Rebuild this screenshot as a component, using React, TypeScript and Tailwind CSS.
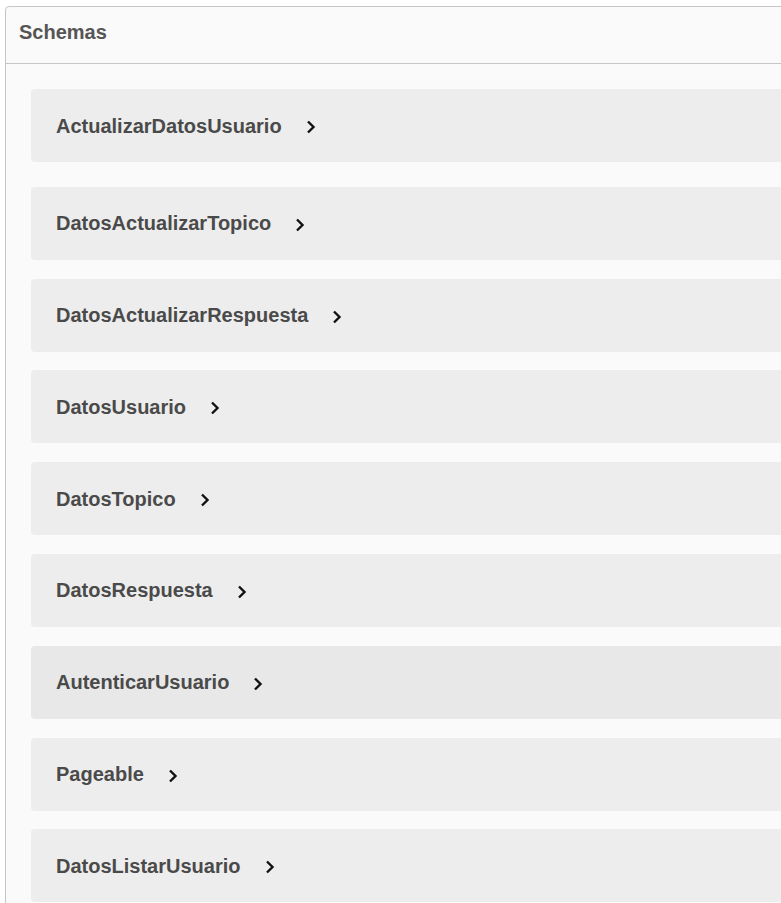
const schemas = [
  "ActualizarDatosUsuario",
  "DatosActualizarTopico",
  "DatosActualizarRespuesta",
  "DatosUsuario",
  "DatosTopico",
  "DatosRespuesta",
  "AutenticarUsuario",
  "Pageable",
  "DatosListarUsuario",
];

function Chevron() {
  return (
    <svg width="10" height="14" viewBox="0 0 10 14" className="ml-[24px] mt-[3px] shrink-0">
      <polyline points="2,1.5 7.5,7 2,12.5" fill="none" stroke="#111" strokeWidth="2.4" />
    </svg>
  );
}

function SchemaRow({ name, hover }: { name: string; hover?: boolean }) {
  return (
    <div
      className={`flex h-[73px] items-center rounded-[4px] pl-[25px] ${
        hover ? "bg-[#e8e8e8]" : "bg-[#ededed]"
      }`}
    >
      <span className="text-[20px] font-bold text-[#4a4a4a]">{name}</span>
      <Chevron />
    </div>
  );
}

export default function App() {
  return (
    <div className="h-[903px] w-[781px] overflow-hidden bg-white font-['Liberation_Sans',Arial,sans-serif]">
      <section className="ml-[5px] mt-[6px] w-[820px] rounded-tl-[4px] border border-[#c6c6c6] bg-[#fafafa] pb-[30px]">
        <div className="flex h-[57px] items-center border-b border-[#c6c6c6] pl-[13px] pb-[6px]">
          <h4 className="text-[20px] font-bold text-[#555]">Schemas</h4>
        </div>
        <div className="flex flex-col gap-[18.8px] pl-[25px] pt-[25px]">
          {schemas.map((s, i) => (
            <div key={s} className={i === 0 ? "mb-[6px]" : ""}>
              <SchemaRow name={s} hover={s === "AutenticarUsuario"} />
            </div>
          ))}
        </div>
      </section>
    </div>
  );
}
